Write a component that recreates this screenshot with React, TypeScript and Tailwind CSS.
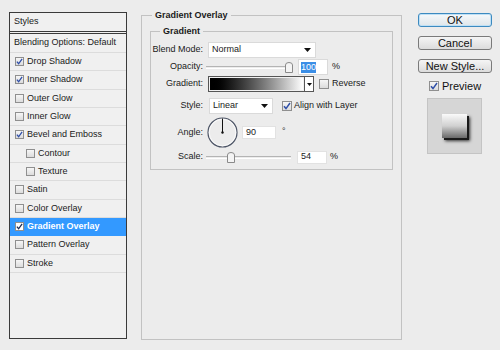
import React from "react";

const styleRows: { label: string; checked: boolean; indent?: boolean; active?: boolean }[] = [
	{ label: "Drop Shadow", checked: true },
	{ label: "Inner Shadow", checked: true },
	{ label: "Outer Glow", checked: false },
	{ label: "Inner Glow", checked: false },
	{ label: "Bevel and Emboss", checked: true },
	{ label: "Contour", checked: false, indent: true },
	{ label: "Texture", checked: false, indent: true },
	{ label: "Satin", checked: false },
	{ label: "Color Overlay", checked: false },
	{ label: "Gradient Overlay", checked: true, active: true },
	{ label: "Pattern Overlay", checked: false },
	{ label: "Stroke", checked: false },
];

function Checkbox({ checked, white, size = 9 }: { checked: boolean; white?: boolean; size?: number }) {
	return (
		<span
			className={`shrink-0 border border-[#8f8f8f] flex items-center justify-center ${
				white ? "bg-white" : "bg-gradient-to-b from-[#f6f6f6] to-[#dcdcdc]"
			}`}
			style={{ width: size, height: size }}
		>
			{checked && (
				<svg width={size - 2} height={size - 2} viewBox="0 0 8 8">
					<path d="M1 4.2 L3 6.6 L7 1" fill="none" stroke={white ? "#1b2a55" : "#2f4fa8"} strokeWidth="1.5" />
				</svg>
			)}
		</span>
	);
}

function Arrow() {
	return (
		<svg width="7" height="4" viewBox="0 0 7 4">
			<path d="M0 0 H7 L3.5 4 Z" fill="#111" />
		</svg>
	);
}

function Thumb() {
	return (
		<svg width="8" height="11" viewBox="0 0 8 11" className="absolute top-[-5px]">
			<path d="M0.5 3 Q0.5 0.5 4 0.5 Q7.5 0.5 7.5 3 V10.5 H0.5 Z" fill="#f4f4f4" stroke="#8a8a8a" />
		</svg>
	);
}

function Slider({ left }: { left: number }) {
	return (
		<div className="relative w-[85px] h-[3px] ml-[3px] border-t border-[#b4b4b4] border-b border-b-white">
			<div className="absolute top-0" style={{ left }}>
				<Thumb />
			</div>
		</div>
	);
}

export default function App() {
	return (
		<div className="w-[500px] h-[350px] bg-[#ececec] flex font-['Liberation_Sans',Arial,sans-serif] text-[9px] text-[#1a1a1a] overflow-hidden">
			{/* Styles list */}
			<div className="ml-[9px] mt-[12px] w-[118px] h-[327px] border border-[#3a3a3a] bg-[#f0f0f0] flex flex-col">
				<div className="h-[21px] flex items-center pl-[4px] border-b-[3px] border-double border-[#3a3a3a]">Styles</div>
				<div className="h-[19px] flex items-center pl-[4px] border-b border-[#dcdcdc]">Blending Options: Default</div>
				{styleRows.map((r) => (
					<div
						key={r.label}
						className={`h-[18.33px] shrink-0 flex items-center gap-[3px] border-b ${
							r.active ? "bg-[#3399ff] text-white font-bold border-[#3399ff]" : "border-[#dcdcdc]"
						} ${r.indent ? "pl-[16px]" : "pl-[5px]"}`}
					>
						<Checkbox checked={r.checked} white={r.active} />
						<span>{r.label}</span>
					</div>
				))}
			</div>

			{/* Gradient Overlay settings */}
			<fieldset className="ml-[14px] mt-[9px] w-[261px] h-[331px] border border-[#c2c2c2] px-[8px]">
				<legend className="ml-[2px] px-[3px] font-bold">Gradient Overlay</legend>
				<fieldset className="mt-[2px] border border-[#c2c2c2] pb-[5px]">
					<legend className="ml-[9px] px-[3px] font-bold">Gradient</legend>
					<div className="flex flex-col mt-[4px]">
						<div className="h-[16px] flex items-center">
							<span className="w-[52px] text-right">Blend Mode:</span>
							<div className="ml-[5px] w-[108px] h-[16px] bg-white border border-[#dadada] flex items-center justify-between pl-[3px] pr-[4px]">
								<span>Normal</span>
								<Arrow />
							</div>
						</div>
						<div className="h-[16px] mt-[1px] flex items-center">
							<span className="w-[52px] text-right">Opacity:</span>
							<Slider left={79} />
							<div className="ml-[7px] w-[30px] h-[16px] bg-white border border-[#dadada] flex items-center pl-[2px]">
								<span className="bg-[#3b8ee6] text-white leading-[11px]">100</span>
							</div>
							<span className="ml-[4px]">%</span>
						</div>
						<div className="h-[16px] mt-[1px] flex items-center">
							<span className="w-[52px] text-right">Gradient:</span>
							<div className="ml-[5px] h-[16px] flex border border-[#555]">
								<div className="w-[95px] h-full bg-gradient-to-r from-black to-white border border-[#f0f0f0]" />
								<div className="w-[9px] h-full bg-white border-l border-[#555] flex items-center justify-center">
									<svg width="5" height="3" viewBox="0 0 5 3">
										<path d="M0 0 H5 L2.5 3 Z" fill="#111" />
									</svg>
								</div>
							</div>
							<span className="ml-[5px]">
								<Checkbox checked={false} size={10} />
							</span>
							<span className="ml-[3px]">Reverse</span>
						</div>
						<div className="h-[16px] mt-[6px] flex items-center">
							<span className="w-[52px] text-right">Style:</span>
							<div className="ml-[6px] w-[64px] h-[16px] bg-white border border-[#dadada] flex items-center justify-between pl-[3px] pr-[4px]">
								<span>Linear</span>
								<Arrow />
							</div>
							<span className="ml-[9px]">
								<Checkbox checked size={10} />
							</span>
							<span className="ml-[2px]">Align with Layer</span>
						</div>
						<div className="h-[31px] mt-[3px] flex items-center">
							<span className="w-[52px] text-right">Angle:</span>
							<svg width="31" height="31" viewBox="0 0 31 31" className="ml-[4px]">
								<circle cx="15.5" cy="15.5" r="14.5" fill="#ececec" stroke="#4d5566" strokeWidth="1.2" />
								<circle cx="15.5" cy="15.5" r="13.3" fill="none" stroke="#ffffff" strokeWidth="0.8" />
								<line x1="15.5" y1="15.5" x2="15.5" y2="1.5" stroke="#111" strokeWidth="1" />
								<circle cx="15.5" cy="15.5" r="1.2" fill="#111" />
							</svg>
							<div className="ml-[4px] w-[34px] h-[13px] bg-white border border-[#e2e2e2] flex items-center pl-[3px]">90</div>
							<span className="ml-[6px] self-start mt-[8px] text-[#333]">°</span>
						</div>
						<div className="h-[14px] mt-[2px] flex items-center">
							<span className="w-[52px] text-right">Scale:</span>
							<Slider left={21} />
							<div className="ml-[6px] w-[30px] h-[13px] bg-white border border-[#e2e2e2] flex items-center pl-[3px]">54</div>
							<span className="ml-[3px]">%</span>
						</div>
					</div>
				</fieldset>
			</fieldset>

			{/* Buttons */}
			<div className="ml-[16px] mt-[13px] w-[74px] flex flex-col items-center text-[11px] text-[#111]">
				<button className="w-[74px] h-[14px] leading-[12px] rounded-[3px] border border-[#3c8ac0] bg-gradient-to-b from-[#f6f9fb] to-[#dfe6ea] shadow-[0_0_0_1px_#bfe0f5_inset]">
					OK
				</button>
				<button className="mt-[9px] w-[74px] h-[14px] leading-[12px] rounded-[3px] border border-[#7a7a7a] bg-gradient-to-b from-[#f5f5f5] to-[#dcdcdc]">
					Cancel
				</button>
				<button className="mt-[9px] w-[74px] h-[14px] leading-[12px] rounded-[3px] border border-[#7a7a7a] bg-gradient-to-b from-[#f5f5f5] to-[#dcdcdc]">
					New Style...
				</button>
				<div className="mt-[7px] h-[12px] leading-[12px] flex items-center gap-[3px] self-start ml-[11px]">
					<Checkbox checked size={10} />
					<span>Preview</span>
				</div>
				<div className="mt-[6px] self-start ml-[9px] w-[55px] h-[56px] bg-[#d6d6d6] border border-[#c4c4c4] flex items-center justify-center">
					<div className="w-[25px] h-[24px] bg-gradient-to-b from-[#fafafa] via-[#d0d0d0] to-[#6a6a6a] shadow-[2px_2px_0_#1a1a1a,3px_3px_3px_#333]" />
				</div>
			</div>
		</div>
	);
}
